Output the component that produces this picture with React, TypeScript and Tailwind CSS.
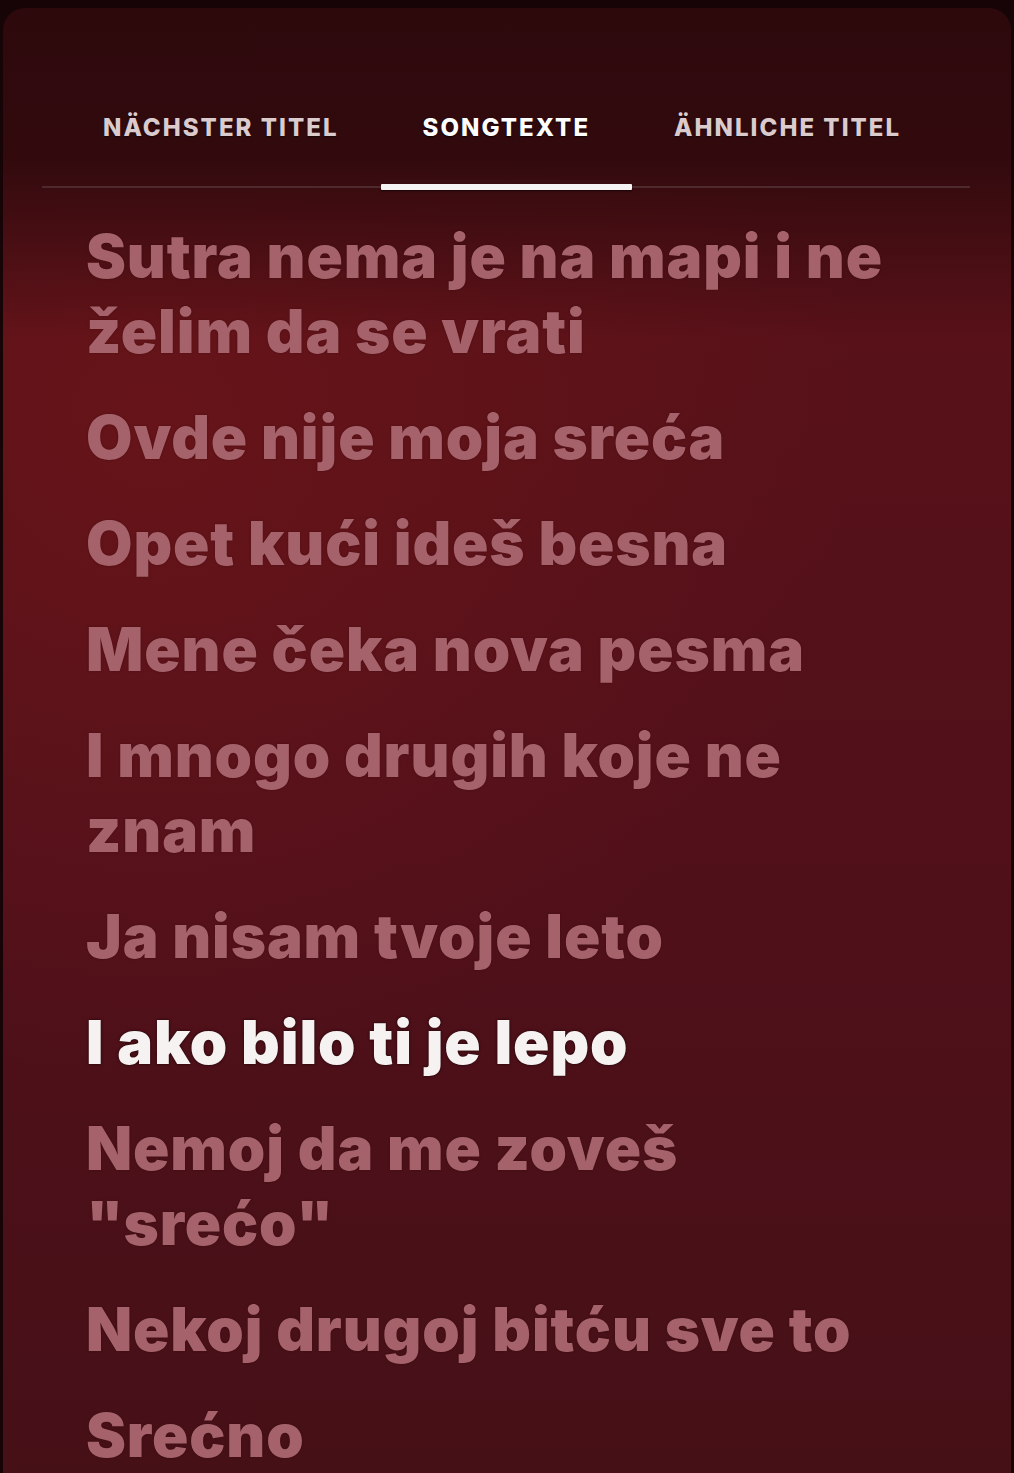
import React from "react";

const groups: string[][] = [
  ["Sutra nema je na mapi i ne", "želim da se vrati"],
  ["Ovde nije moja sreća"],
  ["Opet kući ideš besna"],
  ["Mene čeka nova pesma"],
  ["I mnogo drugih koje ne", "znam"],
  ["Ja nisam tvoje leto"],
  ["I ako bilo ti je lepo"],
  ["Nemoj da me zoveš", "\"srećo\""],
  ["Nekoj drugoj bitću sve to"],
  ["Srećno"],
];

const ACTIVE = 6;

export default function App() {
  return (
    <div className="h-[1473px] w-[1014px] overflow-hidden bg-[#160406] pt-[8px] font-['Inter','Liberation_Sans',sans-serif]">
      <div className="mx-[3px] h-[1465px] overflow-hidden rounded-t-[22px] bg-[linear-gradient(to_bottom,#2d090c_0px,#320a0e_150px,rgba(50,10,14,0)_330px),radial-gradient(ellipse_70%_45%_at_15%_28%,#661419_0%,rgba(90,17,22,0)_100%),linear-gradient(to_bottom,#5c1217_0%,#50101a_60%,#461017_100%)]">
        {/* Tabs */}
        <div className="ml-[39px] mt-[97px] w-[928px] border-b-2 border-[#4e2a2f]">
          <div className="flex pl-[19px]">
            <div className="relative px-[42px] pb-[35px] text-[24px] font-extrabold uppercase leading-[46px] tracking-[0.085em] text-[#dccbcd] [text-shadow:0_1px_2px_rgba(0,0,0,0.6)]">
              Nächster Titel
            </div>
            <div className="relative px-[42px] pb-[35px] text-[24px] font-extrabold uppercase leading-[46px] tracking-[0.085em] text-white [text-shadow:0_1px_2px_rgba(0,0,0,0.8)]">
              Songtexte
              <div className="absolute bottom-[-4px] left-0 right-0 h-[6px] rounded-[1px] bg-[#f4f2f2] shadow-[0_1px_2px_rgba(0,0,0,0.6)]" />
            </div>
            <div className="relative px-[42px] pb-[35px] text-[24px] font-extrabold uppercase leading-[46px] tracking-[0.085em] text-[#dccbcd] [text-shadow:0_1px_2px_rgba(0,0,0,0.6)]">
              Ähnliche Titel
            </div>
          </div>
        </div>

        {/* Lyrics */}
        <div className="flex flex-col gap-[31px] pl-[83px] pr-[40px] pt-[31px]">
          {groups.map((g, i) => (
            <div
              key={i}
              className={
                i === ACTIVE
                  ? "text-[60px] font-black leading-[75px] tracking-[0.015em] text-[#f6f2f2] [text-shadow:0_0_3px_rgba(20,0,0,0.9)]"
                  : "text-[60px] font-black leading-[75px] tracking-[0.015em] text-[#a5626a] [text-shadow:0_0_2px_rgba(30,0,0,0.35)]"
              }
            >
              {g.map((l, j) => (
                <div key={j} className="whitespace-nowrap">
                  {l}
                </div>
              ))}
            </div>
          ))}
        </div>
      </div>
    </div>
  );
}
